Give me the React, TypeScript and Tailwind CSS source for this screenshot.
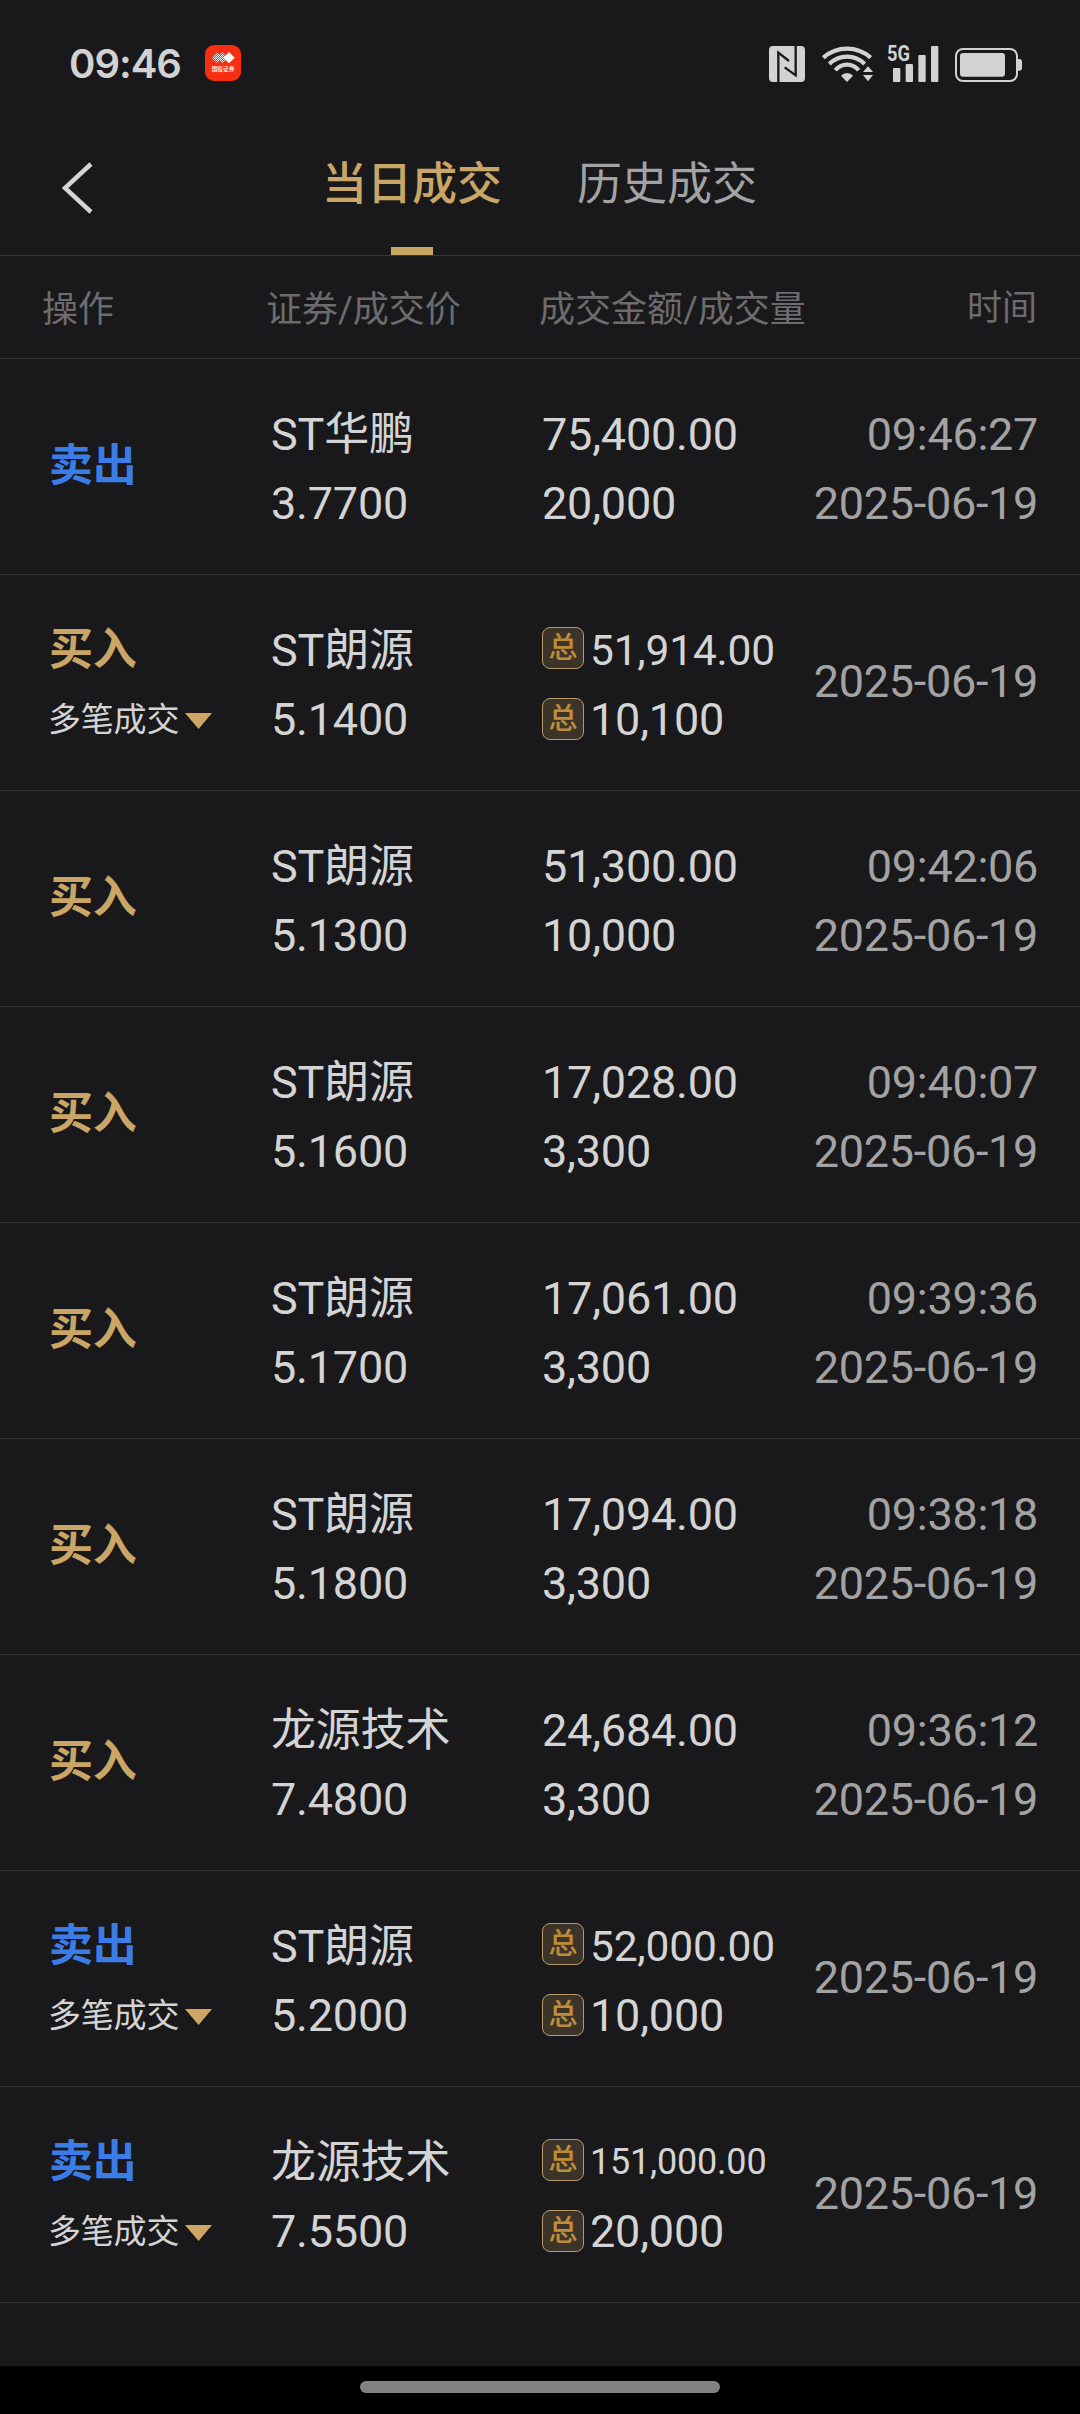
interface Trade {
  side: 'buy' | 'sell'
  name: string
  price: string
  amount: string
  volume: string
  time?: string
  date: string
  multiple?: boolean
  amountClass?: string
}

const trades: Trade[] = [
  { side: 'sell', name: 'ST华鹏', price: '3.7700', amount: '75,400.00', volume: '20,000', time: '09:46:27', date: '2025-06-19' },
  { side: 'buy', name: 'ST朗源', price: '5.1400', amount: '51,914.00', volume: '10,100', date: '2025-06-19', multiple: true, amountClass: 'text-[42.5px]' },
  { side: 'buy', name: 'ST朗源', price: '5.1300', amount: '51,300.00', volume: '10,000', time: '09:42:06', date: '2025-06-19' },
  { side: 'buy', name: 'ST朗源', price: '5.1600', amount: '17,028.00', volume: '3,300', time: '09:40:07', date: '2025-06-19' },
  { side: 'buy', name: 'ST朗源', price: '5.1700', amount: '17,061.00', volume: '3,300', time: '09:39:36', date: '2025-06-19' },
  { side: 'buy', name: 'ST朗源', price: '5.1800', amount: '17,094.00', volume: '3,300', time: '09:38:18', date: '2025-06-19' },
  { side: 'buy', name: '龙源技术', price: '7.4800', amount: '24,684.00', volume: '3,300', time: '09:36:12', date: '2025-06-19' },
  { side: 'sell', name: 'ST朗源', price: '5.2000', amount: '52,000.00', volume: '10,000', date: '2025-06-19', multiple: true, amountClass: 'text-[42.5px]' },
  { side: 'sell', name: '龙源技术', price: '7.5500', amount: '151,000.00', volume: '20,000', date: '2025-06-19', multiple: true, amountClass: 'text-[36px]' }
]

function BrokerIcon() {
  return (
    <svg className="ml-[23px] h-9 w-9" viewBox="0 0 108 108">
      <defs>
        <pattern id="dots" width="6" height="6" patternUnits="userSpaceOnUse">
          <rect width="3" height="3" fill="#fff" />
          <rect x="3" y="3" width="3" height="3" fill="#fff" />
        </pattern>
      </defs>
      <rect width="108" height="108" rx="27" fill="#f62f12" />
      <path d="M20 38 36 22 52 38 36 54Z" fill="url(#dots)" />
      <path d="M36 38 52 22 68 38 52 54Z" fill="url(#dots)" />
      <path d="M55 38 72 21 89 38 72 55Z" fill="#fff" />
      <text x="54" y="79" textAnchor="middle" fontSize="17" fontWeight="500" fill="#fff" fontFamily="Noto Sans CJK SC, sans-serif">
        国投证券
      </text>
    </svg>
  )
}

function StatusIcons() {
  return (
    <div className="ml-auto flex items-end text-[#d2d2d2]">
      {/* NFC */}
      <svg className="h-9 w-9" viewBox="0 0 108 108">
        <rect width="108" height="108" rx="12" fill="currentColor" />
        <path d="M28 108V20L60 45M80 0V88L47 64" fill="none" stroke="#19191b" strokeWidth="7" />
      </svg>
      {/* Wifi */}
      <svg className="ml-[17px] h-9 w-[52px]" viewBox="246 48 156 108">
        <g fill="none" stroke="currentColor" strokeWidth="12.5">
          <path d="M250 83A106.6 106.6 0 0 1 392 83" />
          <path d="M268 102A75 75 0 0 1 374 102" />
          <path d="M286 121A44 44 0 0 1 356 121" />
        </g>
        <path d="M321 156 303 137A25 25 0 0 1 339 137Z" fill="currentColor" />
        <path d="M384 109 399 126H369ZM384 154 399 135H369Z" fill="currentColor" />
      </svg>
      {/* Signal */}
      <svg className="ml-[13px] h-[38px] w-[52px] overflow-visible" viewBox="441 42 156 114">
        <text x="441" y="92" fontSize="64" fontWeight="700" textLength="69" lengthAdjust="spacingAndGlyphs" fill="currentColor" fontFamily="Roboto, sans-serif">
          5G
        </text>
        <rect x="459" y="114" width="22" height="42" rx="3" fill="currentColor" />
        <rect x="497" y="102" width="22" height="54" rx="3" fill="currentColor" />
        <rect x="535" y="75" width="22" height="81" rx="3" fill="currentColor" />
        <rect x="573" y="48" width="22" height="108" rx="3" fill="currentColor" />
      </svg>
      {/* Battery */}
      <svg className="ml-4 h-[34px] w-[67px]" viewBox="645 54 201 102">
        <rect x="648" y="57" width="183" height="96" rx="21" fill="none" stroke="currentColor" strokeWidth="6" />
        <rect x="660" y="69" width="135" height="71" rx="9" fill="currentColor" />
        <path d="M834 87H838A8 8 0 0 1 846 95V114A8 8 0 0 1 838 122H834Z" fill="currentColor" />
      </svg>
    </div>
  )
}

function TotalBadge() {
  return (
    <span className="mr-1.5 flex h-[42px] w-[42px] items-center justify-center rounded-lg border border-[#b8996a] bg-[#3d3429] text-[29px] leading-none font-medium text-[#bf8d3a]">
      总
    </span>
  )
}

function TradeRow({ trade }: { trade: Trade }) {
  const sideColor = trade.side === 'buy' ? 'text-[#c9a566]' : 'text-[#3b7ce6]'

  return (
    <li className="grid h-[216px] grid-cols-[222px_271px_1fr_auto] items-center border-b border-[#2d2d2f] pr-[42px] pl-[49px] text-[45px] leading-[69px] tracking-[-0.2px]">
      <div className={trade.multiple ? 'pt-[5px]' : ''}>
        <div className={`text-[44px] font-bold ${sideColor}`}>{trade.side === 'buy' ? '买入' : '卖出'}</div>
        {trade.multiple && (
          <div className="-ml-px flex items-center text-[33px]">
            多笔成交
            <svg className="mt-0.5 ml-1.5 h-4 w-[27px]" viewBox="0 0 27 16">
              <path d="M0 0H27L13.5 16Z" fill="#cda763" />
            </svg>
          </div>
        )}
      </div>
      <div className="pt-1">
        <div>{trade.name}</div>
        <div>{trade.price}</div>
      </div>
      <div className="pt-1">
        <div className="flex items-center">
          {trade.multiple && (
            <div className="mb-1">
              <TotalBadge />
            </div>
          )}
          <span className={trade.amountClass}>{trade.amount}</span>
        </div>
        <div className="flex items-center">
          {trade.multiple && <TotalBadge />}
          <span>{trade.volume}</span>
        </div>
      </div>
      <div className={`text-right tracking-[-0.3px] text-[#a3a3a3] ${trade.time ? 'pt-1' : 'pb-[3px]'}`}>
        {trade.time && <div>{trade.time}</div>}
        <div>{trade.date}</div>
      </div>
    </li>
  )
}

export default function App() {
  return (
    <div className="flex h-[2414px] w-[1080px] flex-col overflow-hidden bg-[#19191b] font-[Roboto,'Noto_Sans_CJK_SC',sans-serif] text-[#d4d4d4]">
      <div className="flex h-[118px] items-center pt-2 pr-[58px] pl-[69px]">
        <span className="w-[113px] pt-px font-[Inter,sans-serif] text-[40px] font-semibold tracking-[-1px] text-[#d2d2d2]">09:46</span>
        <BrokerIcon />
        <StatusIcons />
      </div>

      <header className="flex h-[138px] border-b border-[#38383a]">
        <button className="flex w-[322px] items-center pt-0.5 pl-[62px]">
          <svg className="h-[52px] w-8" viewBox="0 0 32 52">
            <path d="M29 2 3 26 29 50" fill="none" stroke="#d4d4d4" strokeWidth="4.5" />
          </svg>
        </button>
        <nav className="flex gap-[75px] text-[45px] leading-[130px]">
          <button className="relative pb-[3px] font-medium text-[#c9a566]">
            当日成交
            <span className="absolute bottom-0 left-[69px] h-2 w-[42px] bg-[#c9a566]" />
          </button>
          <button className="pb-[3px] text-[#a3a3a3]">历史成交</button>
        </nav>
      </header>

      <div className="grid h-[103px] grid-cols-[224px_273px_1fr_auto] items-center border-b border-[#38383a] pt-[5px] pr-[43px] pl-[42px] text-[36px] text-[#6c6c6e]">
        <span>操作</span>
        <span>证券/成交价</span>
        <span>成交金额/成交量</span>
        <span className="text-[35px]">时间</span>
      </div>

      <ul className="flex-1">
        {trades.map((trade) => (
          <TradeRow key={trade.amount} trade={trade} />
        ))}
      </ul>

      <div className="flex h-12 justify-center bg-black pt-[15px]">
        <div className="h-3 w-[360px] rounded-full bg-[#828282]" />
      </div>
    </div>
  )
}
